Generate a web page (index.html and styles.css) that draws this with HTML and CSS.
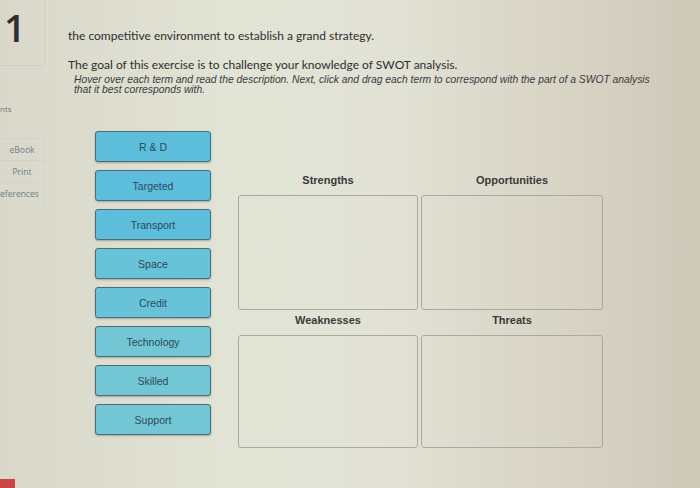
FILE: index.html
```html
<!DOCTYPE html>
<html lang="en">
<head>
  <meta charset="UTF-8" />
  <meta name="viewport" content="width=device-width, initial-scale=1.0" />
  <title>SWOT Analysis - Drag and Drop</title>
  <link rel="stylesheet" href="styles.css">
</head>
<body>
  <div class="page">
    <aside class="sidebar">
      <div class="question-num">1</div>
      <div class="points">nts</div>
      <ul class="tools">
        <li>eBook</li>
        <li>Print</li>
        <li>eferences</li>
      </ul>
    </aside>

    <main class="content">
      <p class="lead">the competitive environment to establish a grand strategy.</p>
      <p class="goal">The goal of this exercise is to challenge your knowledge of SWOT analysis.</p>
      <p class="hint">Hover over each term and read the description. Next, click and drag each term to correspond with the part of a SWOT analysis that it best corresponds with.</p>

      <div class="board">
        <div class="terms">
          <div class="term">R &amp; D</div>
          <div class="term">Targeted</div>
          <div class="term">Transport</div>
          <div class="term">Space</div>
          <div class="term">Credit</div>
          <div class="term">Technology</div>
          <div class="term">Skilled</div>
          <div class="term">Support</div>
        </div>

        <div class="zones">
          <div class="zone">
            <div class="zone-title">Strengths</div>
            <div class="drop"></div>
          </div>
          <div class="zone">
            <div class="zone-title">Opportunities</div>
            <div class="drop"></div>
          </div>
          <div class="zone">
            <div class="zone-title">Weaknesses</div>
            <div class="drop"></div>
          </div>
          <div class="zone">
            <div class="zone-title">Threats</div>
            <div class="drop"></div>
          </div>
        </div>
      </div>
    </main>
  </div>
  <div class="red-tab"></div>
</body>
</html>
```

FILE: styles.css
```css
html, body {
  height: 100%;
}

body {
  margin: 0;
  font-family: 'Liberation Sans', Arial, sans-serif;
  color: #333;
  background: linear-gradient(90deg, #d9d8ca 0%, #e2e4d6 35%, #e1e2d5 55%, #d9d5c7 78%, #cfc8b9 100%);
  overflow: hidden;
}

.page {
  display: flex;
  height: 100%;
}

.sidebar {
  width: 45px;
  flex-shrink: 0;
}

.question-num {
  height: 66px;
  box-sizing: border-box;
  border-right: 1px solid #d0cfc4;
  border-bottom: 1px solid #d0cfc4;
  font-family: 'Open Sans', sans-serif;
  font-weight: 600;
  font-size: 38px;
  line-height: 48px;
  color: #2f2f2f;
  padding: 3px 0 0 4px;
}

.points {
  margin-top: 37px;
  font-family: 'Open Sans', sans-serif;
  font-size: 8px;
  color: #777;
}

.tools {
  list-style: none;
  margin: 24px 0 0;
  padding: 0;
}

.tools li {
  height: 21px;
  line-height: 21px;
  border: 1px solid #d3d2c7;
  border-left: none;
  border-top: none;
  font-family: 'Open Sans', sans-serif;
  font-size: 8.5px;
  color: #6f7f8a;
  text-align: center;
  white-space: nowrap;
  overflow: hidden;
}

.tools li:first-child {
  border-top: 1px solid #d3d2c7;
}

.tools li:last-child {
  text-align: left;
  border-bottom: none;
}

.content {
  padding-left: 23px;
  flex: 1;
}

.lead {
  margin: 28px 0 0;
  font-family: Lato, sans-serif;
  font-size: 12px;
  color: #2e2e2e;
}

.goal {
  margin: 14px 0 0;
  font-family: Lato, sans-serif;
  font-size: 12px;
  color: #2e2e2e;
}

.hint {
  margin: 3px 0 0 6px;
  width: 580px;
  font-size: 10.3px;
  line-height: 10px;
  font-style: italic;
  color: #3a3a40;
}

.board {
  display: flex;
  gap: 27px;
  margin-top: 36px;
  margin-left: 27px;
}

.terms {
  display: flex;
  flex-direction: column;
  gap: 8px;
}

.term {
  width: 116px;
  height: 31px;
  box-sizing: border-box;
  border: 1px solid #4f6d78;
  border-radius: 3px;
  background: #5dbedc;
  box-shadow: 0 1px 2px rgba(40, 60, 70, 0.35);
  color: #2b4a5a;
  font-size: 10.5px;
  display: flex;
  align-items: center;
  justify-content: center;
}

.term:nth-child(n+4) {
  background: #68c3d9;
}

.term:nth-child(n+6) {
  background: #73c6d3;
}

.zones {
  margin-top: 41px;
  display: grid;
  grid-template-columns: 180px 182px;
  column-gap: 3px;
  row-gap: 2px;
}

.zone-title {
  height: 16px;
  line-height: 16px;
  text-align: center;
  font-size: 11px;
  font-weight: bold;
  color: #3a3a3a;
  margin-bottom: 7px;
}

.drop {
  height: 115px;
  box-sizing: border-box;
  border: 1px solid #a9a9a2;
  border-radius: 3px;
}

.zone:nth-child(n+3) .drop {
  height: 113px;
}

.red-tab {
  position: absolute;
  left: 0;
  bottom: 0;
  width: 15px;
  height: 9px;
  background: #cc4545;
}
```
